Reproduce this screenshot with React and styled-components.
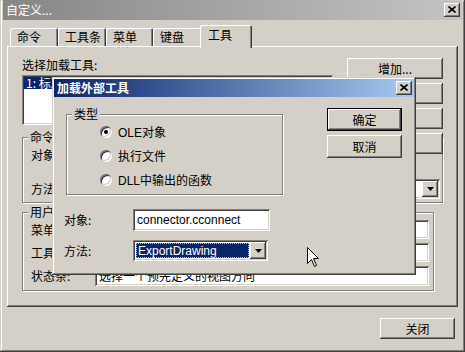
import React from 'react';
import styled, { createGlobalStyle, css } from 'styled-components';

const GlobalStyle = createGlobalStyle`
  html, body { margin: 0; padding: 0; background: #d4d0c8; }
  body {
    font-family: "Noto Sans CJK SC", "DejaVu Sans", sans-serif;
    font-size: 12px;
    line-height: 14px;
    color: #000;
  }
  *, *::before, *::after { box-sizing: border-box; }
`;

const LATIN = `"Liberation Sans", Arial, "Noto Sans CJK SC", sans-serif`;

const raised = css`
  box-shadow: inset -1px -1px #404040, inset 1px 1px #ffffff,
    inset -2px -2px #808080, inset 2px 2px #d4d0c8;
`;
const sunken = css`
  box-shadow: inset 1px 1px #808080, inset -1px -1px #ffffff,
    inset 2px 2px #404040, inset -2px -2px #d4d0c8;
`;

const Window = styled.div`
  position: relative;
  width: 465px;
  height: 352px;
  background: #d4d0c8;
  display: flex;
  flex-direction: column;
  padding: 0 3px 3px 3px;
  overflow: hidden;
  box-shadow: inset -1px -1px #404040, inset 1px 1px #d4d0c8,
    inset -2px -2px #808080, inset 2px 2px #ffffff;
`;

const TitleBar = styled.div`
  height: 20px;
  flex: none;
  display: flex;
  align-items: center;
  justify-content: space-between;
  padding: 0 2px 0 3px;
  background: linear-gradient(to right, ${p => p.$active ? '#0a246a, #a6caf0' : '#868686, #c4c4c4'});
  color: #fff;
  font-weight: ${p => p.$active ? 700 : 400};
  white-space: nowrap;
`;

const CloseBtn = styled.div`
  width: 16px;
  height: 14px;
  background: #d4d0c8;
  ${raised}
  display: flex;
  align-items: center;
  justify-content: center;
  padding: 0 1px 1px 0;
  flex: none;
`;

const CloseIcon = () => (
  <svg width="8" height="7" viewBox="0 0 8 7">
    <path d="M0.5 0.5 L7.5 6.5 M7.5 0.5 L0.5 6.5" stroke="#000" strokeWidth="1.6" fill="none" />
  </svg>
);

const Body = styled.div`
  flex: 1;
  display: flex;
  flex-direction: column;
  padding: 5px 4px 0 4px;
`;

const TabStrip = styled.div`
  display: flex;
  align-items: flex-end;
  height: 21px;
  padding-left: 3px;
`;

const Tab = styled.div`
  width: ${p => p.$w}px;
  height: ${p => (p.$active ? 23 : 18)}px;
  margin-left: ${p => (p.$active ? -2 : 0)}px;
  margin-bottom: ${p => (p.$active ? -2 : 0)}px;
  padding: 0 0 ${p => (p.$active ? 4 : 0)}px ${p => (p.$active ? 8 : 7)}px;
  position: relative;
  z-index: ${p => (p.$active ? 2 : 0)};
  background: #d4d0c8;
  border-radius: 2px 2px 0 0;
  box-shadow: inset 1px 1px #ffffff, inset -1px 0 #404040, inset -2px 0 #808080;
  display: flex;
  align-items: center;
  justify-content: flex-start;
  white-space: nowrap;
`;

const Panel = styled.div`
  height: 261px;
  flex: none;
  ${raised}
  padding: 12px 15px 0 15px;
  display: grid;
  grid-template-columns: 1fr 96px;
  grid-template-rows: auto auto auto;
  column-gap: 14px;
  align-content: start;
`;

const ListArea = styled.div`
  grid-column: 1;
  grid-row: 1;
  display: flex;
  flex-direction: column;
`;

const ButtonStack = styled.div`
  grid-column: 2;
  grid-row: 1 / span 2;
  align-self: start;
  position: relative;
  z-index: 1;
  display: flex;
  flex-direction: column;
  gap: 4px;
`;

const Column = styled.div`
  display: flex;
  flex-direction: column;
  gap: ${p => p.$gap || 0}px;
`;

const Label = styled.div`
  height: 14px;
  line-height: 14px;
  white-space: nowrap;
  overflow: hidden;
`;

const ListBox = styled.div`
  margin-top: 3px;
  height: 50px;
  background: #fff;
  ${sunken}
  padding: 2px;
`;

const ListItem = styled.div`
  height: 12px;
  line-height: 12px;
  padding-left: 2px;
  background: ${p => (p.$selected ? '#0a246a' : 'transparent')};
  color: ${p => (p.$selected ? '#fff' : '#000')};
  white-space: nowrap;
`;

const Button = styled.div`
  width: ${p => p.$w || 75}px;
  height: ${p => p.$h || 21}px;
  flex: none;
  background: #d4d0c8;
  ${p =>
    p.$default
      ? css`
          box-shadow: inset 0 0 0 1px #000, inset -2px -2px #404040, inset 2px 2px #ffffff,
            inset -3px -3px #808080, inset 3px 3px #d4d0c8;
        `
      : raised}
  display: flex;
  align-items: center;
  justify-content: center;
  white-space: nowrap;
`;

const Group = styled.fieldset`
  grid-column: ${p => (p.$row ? '1 / span 2' : 'auto')};
  grid-row: ${p => p.$row || 'auto'};
  margin: ${p => p.$mt || 0}px ${p => p.$mr || 0}px 0 0;
  padding: ${p => p.$pad || '0 2px 3px 8px'};
  min-width: 0;
  border: 1px solid #808080;
  box-shadow: inset 1px 1px #ffffff, 1px 1px 0 #ffffff;
  width: ${p => (p.$w ? `${p.$w}px` : 'auto')};
  height: ${p => (p.$h ? `${p.$h}px` : 'auto')};
`;

const Legend = styled.legend`
  padding: 0 2px;
  margin-left: -3px;
  line-height: 12px;
  height: 12px;
  background: #d4d0c8;
  position: relative;
`;

const FormGrid = styled.div`
  display: grid;
  grid-template-columns: ${p => p.$label}px ${p => p.$field || '1fr'};
  row-gap: ${p => p.$gap}px;
  align-items: center;
  padding-top: ${p => p.$pt || 0}px;
`;

const Field = styled.div`
  height: ${p => p.$h || 20}px;
  width: ${p => (p.$w ? `${p.$w}px` : 'auto')};
  background: #fff;
  ${sunken}
  padding: 0 4px;
  display: flex;
  align-items: center;
  white-space: nowrap;
  overflow: hidden;
  font-family: ${p => (p.$latin ? LATIN : 'inherit')};
`;

const Combo = styled.div`
  height: ${p => p.$h || 20}px;
  width: ${p => (p.$w ? `${p.$w}px` : 'auto')};
  background: #fff;
  ${sunken}
  padding: 2px;
  display: flex;
`;

const ComboText = styled.div`
  flex: 1;
  display: flex;
  align-items: center;
  padding: 0 2px;
  margin: 1px;
  font-family: ${LATIN};
  white-space: nowrap;
  overflow: hidden;
  ${p =>
    p.$selected &&
    css`
      background: #0a246a;
      color: #fff;
      outline: 1px dotted #c0c0c0;
      outline-offset: -1px;
    `}
`;

const DropBtn = styled.div`
  width: 16px;
  background: #d4d0c8;
  ${raised}
  display: flex;
  align-items: center;
  justify-content: center;
`;

const DropArrow = () => (
  <svg width="7" height="4" viewBox="0 0 7 4">
    <path d="M0 0 H7 L3.5 4 Z" fill="#000" />
  </svg>
);

const Footer = styled.div`
  display: flex;
  justify-content: flex-end;
  padding: 11px 3px 0 0;
`;

/* ---- modal ---- */
const Modal = styled.div`
  position: absolute;
  left: 52px;
  top: 77px;
  width: 364px;
  height: 198px;
  background: #d4d0c8;
  padding: 2px;
  z-index: 5;
  display: flex;
  flex-direction: column;
  box-shadow: inset -1px -1px #404040, inset 1px 1px #d4d0c8,
    inset -2px -2px #808080, inset 2px 2px #ffffff;
`;

const ModalTitle = styled(TitleBar)`
  height: 18px;
  padding: 0 2px 0 3px;
`;

const ModalBody = styled.div`
  padding: 11px 12px 0 10px;
  display: flex;
  flex-direction: column;
`;

const ModalTop = styled.div`
  display: flex;
  justify-content: space-between;
  align-items: flex-start;
  padding-left: 2px;
`;

const RadioList = styled.div`
  display: flex;
  flex-direction: column;
  gap: 2px;
  padding: 1px 0 0 25px;
`;

const RadioRow = styled.div`
  height: 22px;
  display: flex;
  align-items: center;
  gap: 6px;
  white-space: nowrap;
`;

const Radio = styled.span`
  width: 12px;
  height: 12px;
  border-radius: 50%;
  background: #fff;
  flex: none;
  position: relative;
  box-shadow: inset 1px 1px #808080, inset -1px -1px #ffffff,
    inset 2px 2px #404040, inset -2px -2px #d4d0c8;
  &::after {
    content: '';
    display: ${p => (p.$checked ? 'block' : 'none')};
    position: absolute;
    left: 4px;
    top: 4px;
    width: 4px;
    height: 4px;
    border-radius: 50%;
    background: #000;
  }
`;

const LatinText = styled.span`
  font-family: ${LATIN};
`;

const Cursor = styled.svg`
  position: absolute;
  left: 307px;
  top: 247px;
  z-index: 10;
`;

export default function App() {
  return (
    <>
      <GlobalStyle />
      <Window>
        <TitleBar>
          <span>自定义...</span>
          <CloseBtn><CloseIcon /></CloseBtn>
        </TitleBar>
        <Body>
          <TabStrip>
            <Tab $w={48}>命令</Tab>
            <Tab $w={48}>工具条</Tab>
            <Tab $w={47}>菜单</Tab>
            <Tab $w={49}>键盘</Tab>
            <Tab $w={52} $active>工具</Tab>
          </TabStrip>
          <Panel>
            <ListArea>
              <Label>选择加载工具:</Label>
              <ListBox>
                <ListItem $selected>1: 标准视图方向</ListItem>
              </ListBox>
            </ListArea>
            <ButtonStack>
              <Button $w={96}>增加...</Button>
              <Button $w={96}>删除</Button>
              <Button $w={96}>上移</Button>
              <Button $w={96}>下移</Button>
            </ButtonStack>
            <Group $row={2} $mt={6}>
              <Legend>命令</Legend>
              <FormGrid $label={64} $gap={14} $pt={2}>
                <Label>对象:</Label>
                <Field $h={20} $w={233} $latin>connector.cconnect</Field>
                <Label>方法:</Label>
                <Combo $h={20}>
                  <ComboText>ExportDrawing</ComboText>
                  <DropBtn><DropArrow /></DropBtn>
                </Combo>
              </FormGrid>
            </Group>
            <Group $row={3} $mt={3} $mr={9} $pad="0 4px 4px 8px">
              <Legend>用户界面</Legend>
              <FormGrid $label={64} $gap={4} $pt={2}>
                <Label>菜单项:</Label>
                <Field $h={19} />
                <Label>工具提示:</Label>
                <Field $h={19} />
                <Label>状态条:</Label>
                <Field $h={20}>选择一个预先定义的视图方向</Field>
              </FormGrid>
            </Group>
          </Panel>
          <Footer>
            <Button $w={75} $h={21}>关闭</Button>
          </Footer>
        </Body>

        <Modal>
          <ModalTitle $active>
            <span>加载外部工具</span>
            <CloseBtn><CloseIcon /></CloseBtn>
          </ModalTitle>
          <ModalBody>
            <ModalTop>
              <Group $w={217} $h={87} $pad="0 4px 4px 8px">
                <Legend>类型</Legend>
                <RadioList>
                  <RadioRow><Radio $checked /><span><LatinText>OLE</LatinText>对象</span></RadioRow>
                  <RadioRow><Radio />执行文件</RadioRow>
                  <RadioRow><Radio /><span><LatinText>DLL</LatinText>中输出的函数</span></RadioRow>
                </RadioList>
              </Group>
              <Column $gap={4}>
                <Button $w={75} $h={23} $default>确定</Button>
                <Button $w={75} $h={23}>取消</Button>
              </Column>
            </ModalTop>
            <FormGrid $label={69} $field="137px" $gap={9} $pt={14}>
              <Label>对象:</Label>
              <Field $h={22} $latin>connector.cconnect</Field>
              <Label>方法:</Label>
              <Combo $h={21} $w={135}>
                <ComboText $selected>ExportDrawing</ComboText>
                <DropBtn><DropArrow /></DropBtn>
              </Combo>
            </FormGrid>
          </ModalBody>
        </Modal>

        <Cursor width="13" height="21" viewBox="0 0 13 21">
          <path d="M0.5 0.5 L0.5 16.5 L4.5 12.5 L7.5 19.5 L9.5 18.5 L6.5 11.5 L11.5 11.5 Z"
            fill="#fff" stroke="#000" strokeWidth="1" strokeLinejoin="miter" />
        </Cursor>
      </Window>
    </>
  );
}
